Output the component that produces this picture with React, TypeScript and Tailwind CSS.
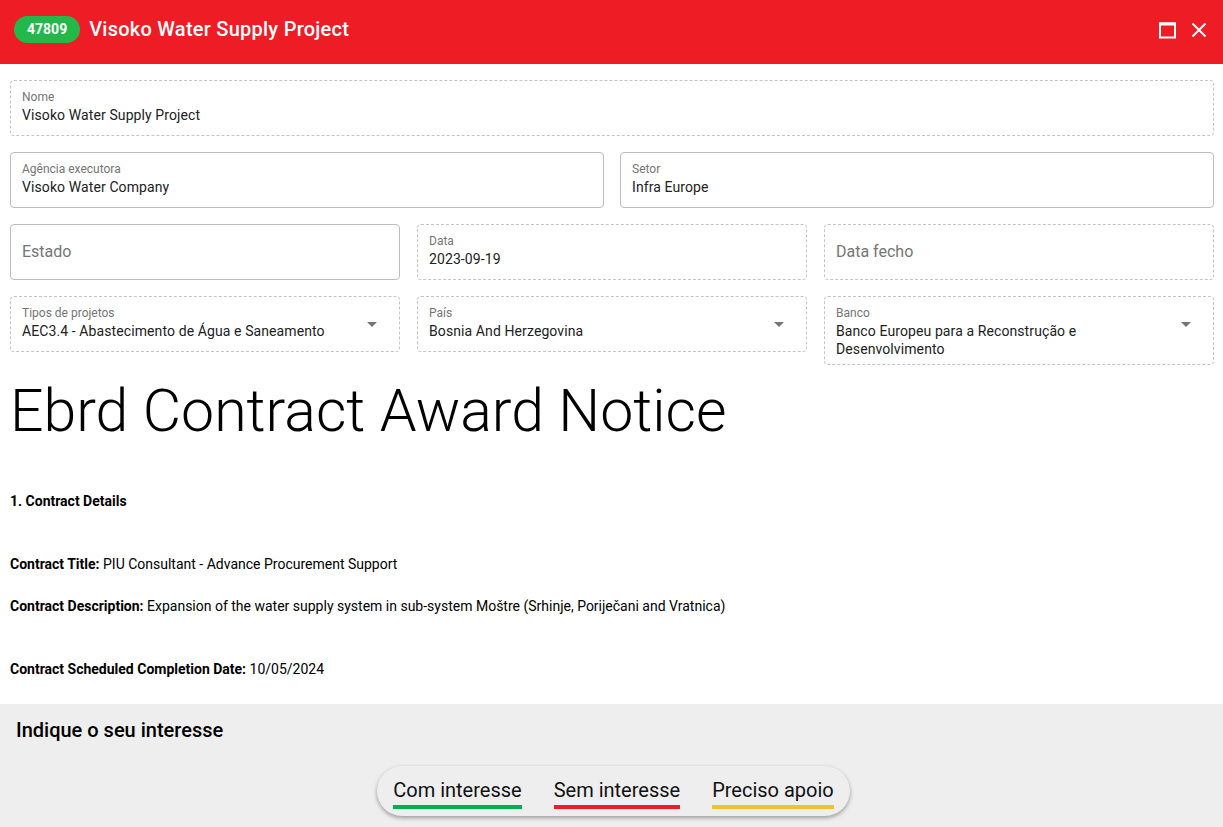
import React from 'react';

type FieldProps = {
  label?: string;
  value?: string;
  placeholder?: string;
  dashed?: boolean;
  select?: boolean;
  className?: string;
};

function Field({ label, value, placeholder, dashed, select, className = '' }: FieldProps) {
  const border = dashed ? 'border-dashed border-[#c4c4c4]' : 'border-solid border-[#bdbdbd]';
  return (
    <div className={`relative flex min-h-[56px] rounded border ${border} ${className}`}>
      {placeholder ? (
        <div className="flex items-center pl-[11px] text-[16px] text-[#757575]">{placeholder}</div>
      ) : (
        <div className="flex flex-col pl-[11px] pr-[40px] pt-[8px] pb-[6px]">
          <span className="text-[12px] leading-[16px] text-[#757575]">{label}</span>
          <span className="mt-[1px] text-[14px] leading-[18px] tracking-[0.1px] text-[#212121]">{value}</span>
        </div>
      )}
      {select && (
        <svg className="absolute right-[22px] top-[25px]" width="10" height="5" viewBox="0 0 10 5">
          <path d="M0 0 L10 0 L5 5 Z" fill="#757575" />
        </svg>
      )}
    </div>
  );
}

export default function App() {
  return (
    <div className="flex h-[827px] flex-col bg-white font-['Roboto',sans-serif] text-black">
      {/* Header */}
      <div className="flex h-[64px] shrink-0 items-center bg-[#ee1c25] pl-[14px] pr-[16px]">
        <span className="mt-[-5px] flex h-[27px] items-center rounded-full bg-[#22b84a] px-[13px] text-[14px] font-bold text-white">
          47809
        </span>
        <span className="ml-[9px] mt-[-6px] text-[20px] font-medium tracking-[0.25px] text-white">Visoko Water Supply Project</span>
        <div className="ml-auto mt-[-4px] flex items-center gap-[15px]">
          <svg width="17" height="17" viewBox="0 0 17 17">
            <rect x="1" y="1.5" width="15" height="14" fill="none" stroke="white" strokeWidth="2" />
            <rect x="0" y="0.5" width="17" height="3" fill="white" />
          </svg>
          <svg width="16" height="16" viewBox="0 0 16 16">
            <path d="M1.5 1.5 L14.5 14.5 M14.5 1.5 L1.5 14.5" stroke="white" strokeWidth="2" />
          </svg>
        </div>
      </div>

      <div className="flex flex-1 flex-col overflow-hidden">
        <div className="flex flex-col gap-[16px] pl-[10px] pr-[9px] pt-[16px]">
          <Field label="Nome" value="Visoko Water Supply Project" dashed />
          <div className="grid grid-cols-2 gap-[16px]">
            <Field label="Agência executora" value="Visoko Water Company" />
            <Field label="Setor" value="Infra Europe" />
          </div>
          <div className="grid grid-cols-3 gap-[17px]">
            <Field placeholder="Estado" />
            <Field label="Data" value="2023-09-19" dashed />
            <Field placeholder="Data fecho" dashed />
          </div>
          <div className="grid grid-cols-3 items-start gap-[17px]">
            <Field label="Tipos de projetos" value="AEC3.4 - Abastecimento de Água e Saneamento" dashed select />
            <Field label="País" value="Bosnia And Herzegovina" dashed select />
            <Field label="Banco" value="Banco Europeu para a Reconstrução e Desenvolvimento" dashed select />
          </div>
        </div>

        <div className="px-[10px]">
          <h1 className="mt-[10px] text-[59px] font-light leading-[72px]">Ebrd Contract Award Notice</h1>
          <p className="mt-[44px] text-[14px] font-bold leading-[20px]">1. Contract Details</p>
          <p className="mt-[43px] text-[14px] leading-[20px]">
            <b>Contract Title:</b> PIU Consultant - Advance Procurement Support
          </p>
          <p className="mt-[22px] text-[14px] leading-[20px]">
            <b>Contract Description:</b> Expansion of the water supply system in sub-system Moštre (Srhinje, Poriječani and Vratnica)
          </p>
          <p className="mt-[43px] text-[14px] leading-[20px]">
            <b>Contract Scheduled Completion Date:</b> 10/05/2024
          </p>
        </div>
      </div>

      {/* Interest bar */}
      <div className="flex h-[123px] shrink-0 flex-col bg-[#eeeeee]">
        <div className="pl-[16px] pt-[14px] text-[20px] font-medium leading-[24px]">Indique o seu interesse</div>
        <div className="mt-[24px] flex justify-center">
          <div className="ml-[4px] flex items-center gap-[32px] rounded-full bg-[#eeeeee] px-[16px] pt-[12px] pb-[7px] shadow-[0_2px_4px_rgba(0,0,0,0.35)]">
            {[
              { t: 'Com interesse', c: 'bg-[#00b050]' },
              { t: 'Sem interesse', c: 'bg-[#ee1c25]' },
              { t: 'Preciso apoio', c: 'bg-[#f4c033]' },
            ].map((b) => (
              <div key={b.t} className="flex flex-col">
                <span className="text-[20px] leading-[24px] text-[#111]">{b.t}</span>
                <span className={`mt-[3px] h-[4px] w-full ${b.c}`} />
              </div>
            ))}
          </div>
        </div>
      </div>
    </div>
  );
}
